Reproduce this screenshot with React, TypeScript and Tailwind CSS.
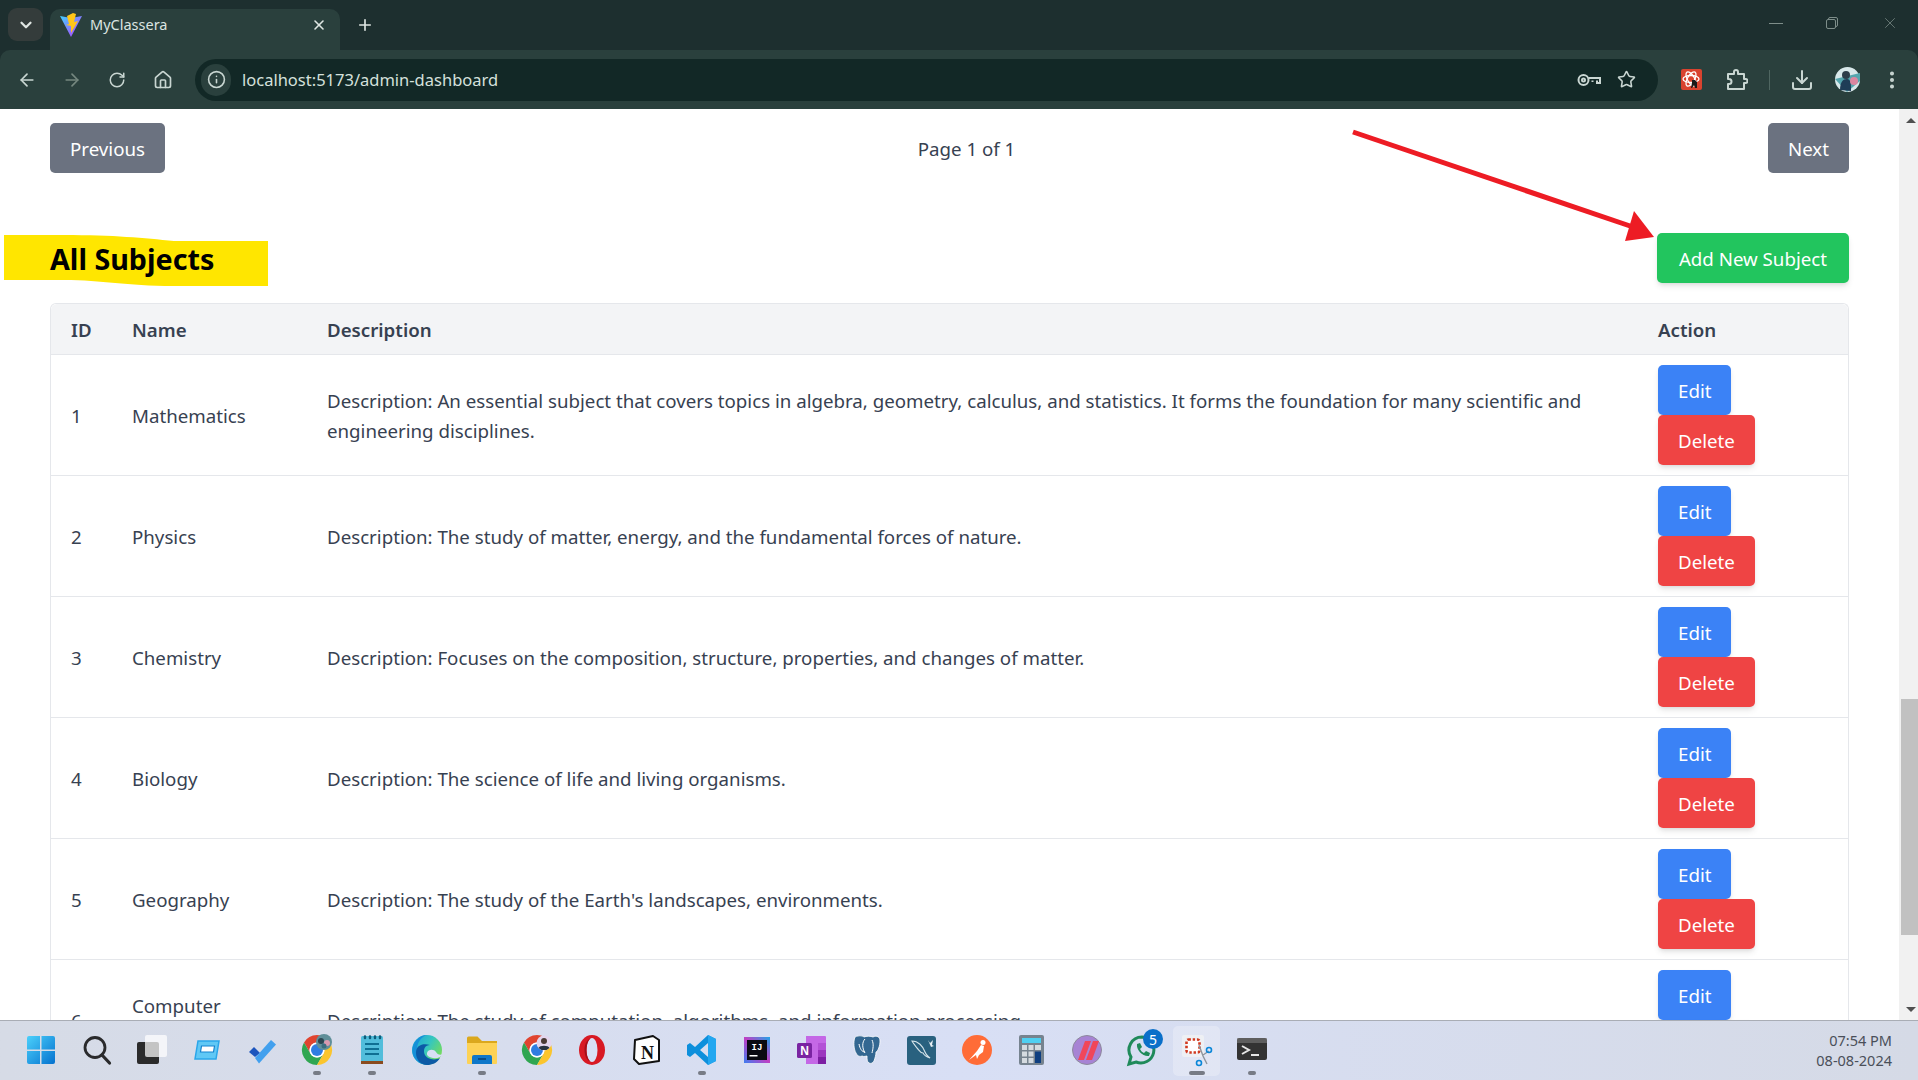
import { ReactNode } from "react";
import { ArrowLeft, ArrowRight, ChevronDown, Download, EllipsisVertical, Home, Info, Plus, RotateCw, Star, X } from "lucide-react";

type Subject = { id: number; name: string; description: string };

const subjects: Subject[] = [
  {
    id: 1,
    name: "Mathematics",
    description:
      "Description: An essential subject that covers topics in algebra, geometry, calculus, and statistics. It forms the foundation for many scientific and engineering disciplines.",
  },
  { id: 2, name: "Physics", description: "Description: The study of matter, energy, and the fundamental forces of nature." },
  { id: 3, name: "Chemistry", description: "Description: Focuses on the composition, structure, properties, and changes of matter." },
  { id: 4, name: "Biology", description: "Description: The science of life and living organisms." },
  { id: 5, name: "Geography", description: "Description: The study of the Earth's landscapes, environments." },
  { id: 6, name: "Computer Science", description: "Description: The study of computation, algorithms, and information processing." },
];

function ChromeLogo() {
  return (
    <>
      <path d="M2 7.5A15 15 0 0 1 28 7.5H15A7.5 7.5 0 0 0 8.5 18.75Z" fill="#e0442f" />
      <path d="M2 7.5A15 15 0 0 0 15 30L21.5 18.75A7.5 7.5 0 0 1 8.5 18.75Z" fill="#2fa651" />
      <path d="M28 7.5A15 15 0 0 1 15 30L21.5 18.75A7.5 7.5 0 0 0 15 7.5Z" fill="#fbc52d" />
      <circle cx="15" cy="15" r="7.5" fill="#fff" />
      <circle cx="15" cy="15" r="6" fill="#2f7de1" />
    </>
  );
}

const taskbarIcons: { key: string; running?: boolean; wide?: boolean; icon: ReactNode }[] = [
  {
    key: "start",
    icon: (
      <>
        <defs>
          <linearGradient id="win" x1="0" y1="0" x2="1" y2="1">
            <stop offset="0" stopColor="#4bd0fb" />
            <stop offset="1" stopColor="#0572cf" />
          </linearGradient>
        </defs>
        <path d="M0 3a2 2 0 0 1 2-2h11v13.500H0zM14.500 1H26a2 2 0 0 1 2 2v11.500H14.500zM0 16h13v13H2a2 2 0 0 1-2-2zM14.500 16H28v11a2 2 0 0 1-2 2H14.500z" fill="url(#win)" />
      </>
    ),
  },
  {
    key: "search",
    icon: (
      <>
        <circle cx="13" cy="12.500" r="10" fill="none" stroke="#2a2a2c" strokeWidth="2.800" />
        <path d="M20 20l7.500 8" stroke="#2a2a2c" strokeWidth="3.200" strokeLinecap="round" />
      </>
    ),
  },
  {
    key: "taskview",
    icon: (
      <>
        <rect x="0" y="7" width="22" height="22" rx="2" fill="#2b2b2b" />
        <rect x="8" y="0" width="22" height="22" rx="2" fill="#fff" fillOpacity="0.72" />
      </>
    ),
  },
  {
    key: "widget",
    icon: (
      <>
        <path d="M6 6h21l-3 18H3z" fill="#60c8f5" stroke="#2aa6ea" strokeWidth="1.500" />
        <path d="M9.500 11h13l-1 6h-13z" fill="#fff" stroke="#1583cf" strokeWidth="1.200" />
      </>
    ),
  },
  {
    key: "todo",
    icon: (
      <>
        <path d="M2 17l5-5 6 6-5 4z" fill="#1c55bd" />
        <path d="M8 23L24 5l5 4.500-17 19z" fill="#42a0ee" />
      </>
    ),
  },
  {
    key: "chrome-1",
    running: true,
    icon: (
      <>
        <ChromeLogo />
        <circle cx="22" cy="7" r="8" fill="#5f8f99" />
        <circle cx="19" cy="6" r="3" fill="#2d4652" />
        <circle cx="25" cy="8" r="3" fill="#d99ab0" />
        <circle cx="22" cy="11" r="2.500" fill="#3b6d80" />
      </>
    ),
  },
  {
    key: "notepad",
    running: true,
    icon: (
      <>
        <rect x="4" y="1" width="22" height="26" rx="1.500" fill="#52bddb" />
        <rect x="4" y="26" width="22" height="3" fill="#8a4b1f" />
        <path d="M8 9h14M8 14h14M8 19h14" stroke="#0f6f93" strokeWidth="2" />
        <path d="M8 1.500v1.500M13 1.500v1.500M18 1.500v1.500M23 1.500v1.500" stroke="#0f5c7a" strokeWidth="2.500" strokeLinecap="round" />
      </>
    ),
  },
  {
    key: "edge",
    icon: (
      <>
        <defs>
          <linearGradient id="edgeA" x1="0" y1="0" x2="1" y2="0.600">
            <stop offset="0" stopColor="#1a9fdc" />
            <stop offset="0.550" stopColor="#35c6c0" />
            <stop offset="1" stopColor="#74dc5c" />
          </linearGradient>
        </defs>
        <circle cx="15" cy="15" r="15" fill="url(#edgeA)" />
        <path d="M0.500 13C2 6 8 0 15 0C8 2 2 11 7 22C9 26 13 29 18 29.700C8 31 -1 24 0.500 13Z" fill="#1590d8" />
        <path d="M4 18C4 10 11 8 18 10C13 10 11 14 12.500 19C14.500 24 22 26 28 23C25 28 20 30 15 30C9 30 4 25 4 18Z" fill="#0c5aa6" />
        <path d="M15 18C16 14 22 14 24 17C25 19 27 20 30 19.500C29 23 23 24 19 22.500C16 21.500 14.500 20 15 18Z" fill="#d8dff5" />
      </>
    ),
  },
  {
    key: "files",
    running: true,
    icon: (
      <>
        <path d="M0 3a1.500 1.500 0 0 1 1.500-1.500h9L15 6h15v22H0z" fill="#dba81d" />
        <path d="M0 8h30v20a1 1 0 0 1-1 1H1a1 1 0 0 1-1-1z" fill="#fdd255" />
        <path d="M5 29v-7a2 2 0 0 1 2-2h16a2 2 0 0 1 2 2v7z" fill="#0f77c9" />
        <path d="M11 24h8" stroke="#063f73" strokeWidth="1.500" />
      </>
    ),
  },
  {
    key: "chrome-2",
    icon: (
      <>
        <ChromeLogo />
        <circle cx="22" cy="8" r="7.500" fill="#e3d5ec" />
        <circle cx="22" cy="6" r="3" fill="#4a3a34" />
        <path d="M16.500 13c1-3 10-3 11 0l-3 2h-5z" fill="#27323f" />
      </>
    ),
  },
  {
    key: "opera",
    icon: (
      <>
        <ellipse cx="15" cy="15" rx="13" ry="15" fill="#d81923" />
        <ellipse cx="15" cy="15" rx="5.500" ry="12" fill="#d8dff5" />
        <path d="M9.500 15c0-6 2-10 4-11.500C10 4.500 7.500 9 7.500 15s2.500 10.500 6 11.500c-2-1.500-4-5.500-4-11.500z" fill="#a30f18" />
      </>
    ),
  },
  {
    key: "notion",
    icon: (
      <>
        <path d="M3 5l18-4 6 4v21l-20 3-5-5z" fill="#fff" stroke="#111" strokeWidth="2" strokeLinejoin="round" />
        <text x="15.500" y="24" textAnchor="middle" fontSize="18" fontWeight="700" fontFamily="'Liberation Serif', serif" fill="#111">
          N
        </text>
      </>
    ),
  },
  {
    key: "vscode",
    running: true,
    icon: (
      <>
        <path d="M21 0l8 4v22l-8 4-13-12-5 4-3-2v-10l3-2 5 4zM21 8l-8 7 8 7z" fill="#0d8fdc" fillRule="evenodd" />
        <path d="M21 0l8 4v22l-8 4z" fill="#23a7f0" />
      </>
    ),
  },
  {
    key: "intellij",
    icon: (
      <>
        <defs>
          <linearGradient id="ij" x1="0" y1="1" x2="1" y2="0">
            <stop offset="0" stopColor="#3e7ff0" />
            <stop offset="0.500" stopColor="#c03fc4" />
            <stop offset="1" stopColor="#1fa5e8" />
          </linearGradient>
        </defs>
        <rect x="2" y="2" width="26" height="26" fill="url(#ij)" />
        <rect x="5" y="5" width="20" height="20" fill="#0a0a12" />
        <text x="15" y="15" textAnchor="middle" fontSize="9" fontWeight="700" fontFamily="'Liberation Mono', monospace" fill="#fff">
          IJ
        </text>
        <rect x="7.500" y="20" width="8" height="1.500" fill="#fff" />
      </>
    ),
  },
  {
    key: "onenote",
    icon: (
      <>
        <path d="M9 1h19a1 1 0 0 1 1 1v26a1 1 0 0 1-1 1H9z" fill="#c468e6" />
        <path d="M21 8h8v7h-8z" fill="#b352d6" />
        <path d="M21 15h8v7h-8z" fill="#9c36bf" />
        <path d="M21 22h8v7h-8z" fill="#7d1fa3" />
        <rect x="0" y="8" width="15" height="15" rx="1.500" fill="#7a24a2" />
        <text x="7.500" y="20" textAnchor="middle" fontSize="12" fontWeight="700" fontFamily="'Liberation Sans', sans-serif" fill="#fff">
          N
        </text>
      </>
    ),
  },
  {
    key: "postgres",
    icon: (
      <>
        <path d="M3 2c4-2 8-1 9 0 2-1 7-1 9 0 4-2 7 0 7 4 0 5-2 10-4 11 0 3-1 6-2 9-1 2-3 3-5 2-2-1-2-4-2-7-1 0-3 1-5 0-2 1-5 0-6-3C2 15 1 7 3 2z" fill="#336791" stroke="#fff" strokeWidth="0.800" />
        <path d="M13 4c-3 3-3 9 0 14M20 5c2 4 1 9 0 13M7 9c1 5 3 8 6 8" stroke="#fff" strokeWidth="1" fill="none" />
      </>
    ),
  },
  {
    key: "mysql",
    icon: (
      <>
        <rect x="0" y="1" width="29" height="29" rx="3" fill="#29617f" />
        <path d="M5 6c6 0 11 5 13 11 1 3 3 4 5 6-3-1-6-3-7-5-3 0-4-3-6-5-2-3-4-5-5-7z" fill="none" stroke="#d5e4ea" strokeWidth="1.100" />
        <path d="M21 5l2 3 3-3-1 5 2 1-3 1z" fill="#e6eef2" />
      </>
    ),
  },
  {
    key: "postman",
    icon: (
      <>
        <circle cx="15" cy="15" r="15" fill="#ff6c37" />
        <circle cx="21" cy="7.500" r="2.500" fill="#fff" />
        <path d="M19 10l3 1-1 6-4 3-2 4-1-4-7 5 8-9z" fill="#fff" />
      </>
    ),
  },
  {
    key: "calculator",
    icon: (
      <>
        <rect x="2" y="0" width="25" height="30" rx="2" fill="#76838f" />
        <rect x="5" y="3" width="19" height="5" fill="#4fd0f2" />
        <path d="M5 10h5v5H5zM11.500 10h5v5h-5zM18 10h6v5h-6zM5 16.500h5v5H5zM11.500 16.500h5v5h-5zM5 23h5v5H5zM11.500 23h5v5h-5z" fill="#d5dbe0" />
        <rect x="18" y="16.500" width="6" height="11.500" fill="#0f3f80" />
      </>
    ),
  },
  {
    key: "recall",
    icon: (
      <>
        <circle cx="15" cy="15" r="14.500" fill="#a783d4" stroke="#8d8a9c" strokeWidth="1" />
        <path d="M6 25L13 6h6l-7 19zM14 25L21 6h6l-7 19z" fill="#f0465a" />
      </>
    ),
  },
  {
    key: "whatsapp",
    icon: (
      <>
        <path d="M15 2a13 13 0 0 0-11 20L2 29l7-2a13 13 0 1 0 6-25z" fill="none" stroke="#1f8a5a" strokeWidth="3" />
        <path d="M10 9l3-1 2 4-2 2c1 2 2 3 4 4l2-2 4 2-1 3c-6 1-13-6-12-12z" fill="#1f8a5a" />
      </>
    ),
  },
  {
    key: "snip",
    running: true,
    wide: true,
    icon: (
      <>
        <rect x="0" y="0" width="22" height="22" rx="2" fill="#eef0f4" />
        <rect x="4.500" y="4.500" width="13" height="13" rx="2" fill="#fff" stroke="#d1391f" strokeWidth="2.600" strokeDasharray="2.400 1.800" />
        <path d="M17 10l4 11 4 8" stroke="#8e949c" strokeWidth="1.400" fill="none" />
        <path d="M21 20l6-4" stroke="#8e949c" strokeWidth="1.400" />
        <circle cx="27" cy="15" r="2.500" fill="none" stroke="#0b87d8" strokeWidth="1.600" />
        <circle cx="17" cy="28" r="2.500" fill="none" stroke="#0b87d8" strokeWidth="1.600" />
      </>
    ),
  },
  {
    key: "terminal",
    running: true,
    icon: (
      <>
        <rect x="0" y="3" width="30" height="22" rx="2" fill="#333" />
        <rect x="0" y="3" width="30" height="5" fill="#8a8a8a" opacity="0.500" />
        <path d="M5 11l7 4-7 4" fill="none" stroke="#e6e6e6" strokeWidth="2" />
        <path d="M14 20h8" stroke="#e6e6e6" strokeWidth="2" />
      </>
    ),
  },
];

function Taskbar() {
  return (
    <footer className="flex h-[60px] shrink-0 items-start justify-between border-t border-[#a9adb5] bg-gradient-to-r from-[#d6dbe6] via-[#d8dff5] to-[#d5dae6] pl-[14px] pr-[26px]">
      <div className="flex">
        {taskbarIcons.map((item) => (
          <div key={item.key} className="relative flex h-[59px] w-[55px] justify-center pt-[14px]">
            {item.wide ? <div className="absolute left-[4px] top-[5px] h-[50px] w-[47px] rounded-[5px] bg-white/25" /> : null}
            <svg width="30" height="30" viewBox="0 0 30 30" className="relative overflow-visible">
              {item.icon}
            </svg>
            {item.key === "whatsapp" ? (
              <span className="absolute left-[29px] top-[8px] flex h-[20px] w-[20px] items-center justify-center rounded-full bg-[#0a6fc9] text-[14px] text-white">
                5
              </span>
            ) : null}
            {item.running ? (
              <span className={`absolute bottom-[5px] h-[4px] rounded-full bg-[#777b85] ${item.wide ? "w-[16px]" : "w-[8px]"}`} />
            ) : null}
          </div>
        ))}
      </div>
      <div className="pt-[9px] text-right text-[14.500px] leading-[20px] text-[#4a4f59]">
        <div>07:54 PM</div>
        <div>08-08-2024</div>
      </div>
    </footer>
  );
}

function BrowserChrome() {
  return (
    <header className="shrink-0 bg-[#1d2f2f] text-[#c9d6d2]">
      <div className="flex h-[50px] items-end pl-[8px]">
        <div className="mb-[9px] flex h-[33px] w-[35px] items-center justify-center rounded-[9px] bg-[#343c3b]">
          <ChevronDown size={18} strokeWidth={3} className="text-[#dfe6e3]" />
        </div>
        <div className="ml-[7px] flex h-[41px] w-[290px] items-center rounded-t-[10px] bg-[#2a403d] pb-[9px] pl-[10px] pr-[13px]">
          <svg width="22" height="24" viewBox="0 0 22 24">
            <defs>
              <linearGradient id="vite" x1="0" y1="0" x2="1" y2="1">
                <stop offset="0" stopColor="#41d1ff" />
                <stop offset="1" stopColor="#bd34fe" />
              </linearGradient>
            </defs>
            <path d="M0 3l11 2 11-2-11 21z" fill="url(#vite)" />
            <path d="M13 0L7 3l2 8-3 1 5 1 0 7 7-12-4 1 2-8z" fill="#ffc517" />
          </svg>
          <span className="ml-[8px] flex-1 text-[14.500px] text-[#dbe4e1]">MyClassera</span>
          <X size={16} strokeWidth={2.400} className="text-[#dfe6e3]" />
        </div>
        <Plus size={18} strokeWidth={2.200} className="mb-[16px] ml-[16px] text-[#dfe6e3]" />
        <div className="mb-[18px] ml-auto flex items-center text-[#7e8e8a]">
          <div className="h-px w-[14px] bg-current" />
          <div className="relative ml-[43px] h-[12px] w-[12px]">
            <div className="absolute right-0 top-0 h-[10px] w-[10px] rounded-[2px] border border-current" />
            <div className="absolute bottom-0 left-0 h-[10px] w-[10px] rounded-[2px] border border-current bg-[#1d2f2f]" />
          </div>
          <X size={18} strokeWidth={1} className="ml-[43px] mr-[19px]" />
        </div>
      </div>
      <div className="flex h-[59px] items-center rounded-t-[10px] bg-[#2a403d] pl-[17px] pr-[12px]">
        <ArrowLeft size={20} strokeWidth={2} />
        <ArrowRight size={20} strokeWidth={2} className="ml-[25px] text-[#75877f]" />
        <RotateCw size={18} strokeWidth={2} className="ml-[26px]" />
        <Home size={20} strokeWidth={2} className="ml-[27px]" />
        <div className="ml-[22px] flex h-[42px] w-[1463px] items-center rounded-full bg-[#122826] pl-[6px] pr-[22px]">
          <div className="flex h-[32px] w-[30px] items-center justify-center rounded-full bg-[#2a403d]">
            <Info size={19} strokeWidth={2} />
          </div>
          <span className="ml-[11px] flex-1 pt-[1px] text-[16.500px] text-[#d5e0dc]">localhost:5173/admin-dashboard</span>
          <svg width="24" height="14" viewBox="0 0 24 14" fill="none" stroke="currentColor" strokeWidth="2">
            <circle cx="6.500" cy="7" r="5" />
            <circle cx="6.500" cy="7" r="1.500" />
            <path d="M11.500 5h11.500v5h-3V7.500M15.500 7.500V9" />
          </svg>
          <Star size={19} strokeWidth={2} className="ml-[16px]" />
        </div>
        <svg width="21" height="21" viewBox="0 0 21 21" className="ml-[23px]">
          <rect width="21" height="21" rx="2" fill="#d9432f" />
          <g fill="none" stroke="#fff" strokeWidth="1.300">
            <ellipse cx="10" cy="10" rx="8" ry="3.500" />
            <ellipse cx="10" cy="10" rx="8" ry="3.500" transform="rotate(60 10 10)" />
            <ellipse cx="10" cy="10" rx="8" ry="3.500" transform="rotate(120 10 10)" />
          </g>
          <path d="M11 11h3l2 2v6h-2l-1-3-2 3h-1l1-5z" fill="#1a1a1a" />
        </svg>
        <svg width="22" height="22" viewBox="0 0 22 22" fill="none" stroke="currentColor" strokeWidth="2" strokeLinejoin="round" className="ml-[24px]">
          <path d="M2 5h6V3a2 2 0 0 1 4 0v2h6v5h1.500a2 2 0 0 1 0 4H18v6H2v-5h1a2.500 2.500 0 0 0 0-5H2z" />
        </svg>
        <div className="ml-[21px] h-[20px] w-px bg-[#4f6661]" />
        <Download size={24} strokeWidth={2} className="ml-[20px]" />
        <svg width="25" height="25" viewBox="0 0 25 25" className="ml-[21px]">
          <circle cx="12.500" cy="12.500" r="12.500" fill="#d8e8ea" />
          <path d="M0 12L25 6v8L12 25z" fill="#55a6ae" />
          <circle cx="11" cy="8" r="4" fill="#2d3d49" />
          <path d="M5 23c0-8 3-11 7-11s4 5 4 12z" fill="#1e3d57" />
          <circle cx="19" cy="14" r="4" fill="#dc86a0" />
        </svg>
        <EllipsisVertical size={22} strokeWidth={2.400} className="ml-[21px]" />
      </div>
    </header>
  );
}

function Scrollbar() {
  return (
    <div className="flex w-[19px] shrink-0 flex-col items-end bg-[#f1f1f1]">
      <div className="mr-[2px] mt-[9px] h-0 w-0 border-x-[5px] border-b-[5px] border-x-transparent border-b-[#505050]" />
      <div className="mt-[576px] h-[236px] w-[17px] bg-[#c1c1c1]" />
      <div className="mr-[2px] mt-[72px] h-0 w-0 border-x-[5px] border-t-[5px] border-x-transparent border-t-[#505050]" />
    </div>
  );
}

export default function App() {
  return (
    <div className="relative flex h-screen flex-col overflow-hidden bg-white font-['Noto_Sans',sans-serif]">
      <BrowserChrome />
      <main className="flex min-h-0 flex-1">
        <div className="min-w-0 flex-1 overflow-hidden px-[50px] pt-[14px] text-[18.700px] leading-[30px] text-[#374151]">
          <div className="flex items-center justify-between">
            <button className="rounded-[5px] bg-[#6b7280] px-5 pb-[9px] pt-[11px] text-white">Previous</button>
            <span className="pt-[1px]">Page 1 of 1</span>
            <button className="rounded-[5px] bg-[#6b7280] px-5 pb-[9px] pt-[11px] text-white">Next</button>
          </div>

          <div className="mt-[60px] flex items-center justify-between">
            <div className="relative">
              <svg width="264" height="51" viewBox="0 0 264 51" className="absolute left-[-46px] top-[-5px]">
                <path d="M0 0H60C110 0 140 3 170 6H264V51H170C120 51 100 45 60 45H0Z" fill="#ffe600" />
              </svg>
              <h2 className="relative pt-[1px] text-[28.700px] font-bold leading-[36px] text-black">All Subjects</h2>
            </div>
            <button className="rounded-[5px] bg-[#22c55e] px-[22px] pb-[9px] pt-[11px] text-white shadow-md">Add New Subject</button>
          </div>

          <table className="mt-[20px] w-full table-fixed border-separate border-spacing-0 rounded-t-[6px] border-x border-t border-[#e5e7eb]">
            <colgroup>
              <col className="w-[61px]" />
              <col className="w-[195px]" />
              <col />
              <col className="w-[210px]" />
            </colgroup>
            <thead>
              <tr className="bg-[#f3f4f6] text-left font-semibold">
                <th className="rounded-tl-[6px] border-b border-[#e5e7eb] pb-[9px] pl-[20px] pt-[11px] font-semibold">ID</th>
                <th className="border-b border-[#e5e7eb] pb-[9px] pl-[20px] pt-[11px] font-semibold">Name</th>
                <th className="border-b border-[#e5e7eb] pb-[9px] pl-[20px] pt-[11px] font-semibold">Description</th>
                <th className="rounded-tr-[6px] border-b border-[#e5e7eb] pb-[9px] pl-[20px] pt-[11px] font-semibold">Action</th>
              </tr>
            </thead>
            <tbody>
              {subjects.map((subject) => (
                <tr key={subject.id}>
                  <td className="border-b border-[#e5e7eb] pl-[20px] pt-[2px]">{subject.id}</td>
                  <td className="border-b border-[#e5e7eb] px-[20px] pt-[2px]">{subject.name}</td>
                  <td className="border-b border-[#e5e7eb] px-[20px] pt-[2px]">{subject.description}</td>
                  <td className="border-b border-[#e5e7eb] py-[10px] pl-[20px]">
                    <div className="flex flex-col items-start">
                      <button className="rounded-[5px] bg-[#3b82f6] px-5 pb-[9px] pt-[11px] text-white shadow-md">Edit</button>
                      <button className="rounded-[5px] bg-[#ef4444] px-5 pb-[9px] pt-[11px] text-white shadow-md">Delete</button>
                    </div>
                  </td>
                </tr>
              ))}
            </tbody>
          </table>
        </div>
        <Scrollbar />
      </main>
      <Taskbar />
      {/* hand-drawn annotation from the screenshot */}
      <svg width="1918" height="1080" className="pointer-events-none absolute inset-0">
        <path d="M1353 132L1636 228" stroke="#ed1c24" strokeWidth="5" />
        <path d="M1654 237L1634 211L1625 241Z" fill="#ed1c24" />
      </svg>
    </div>
  );
}
